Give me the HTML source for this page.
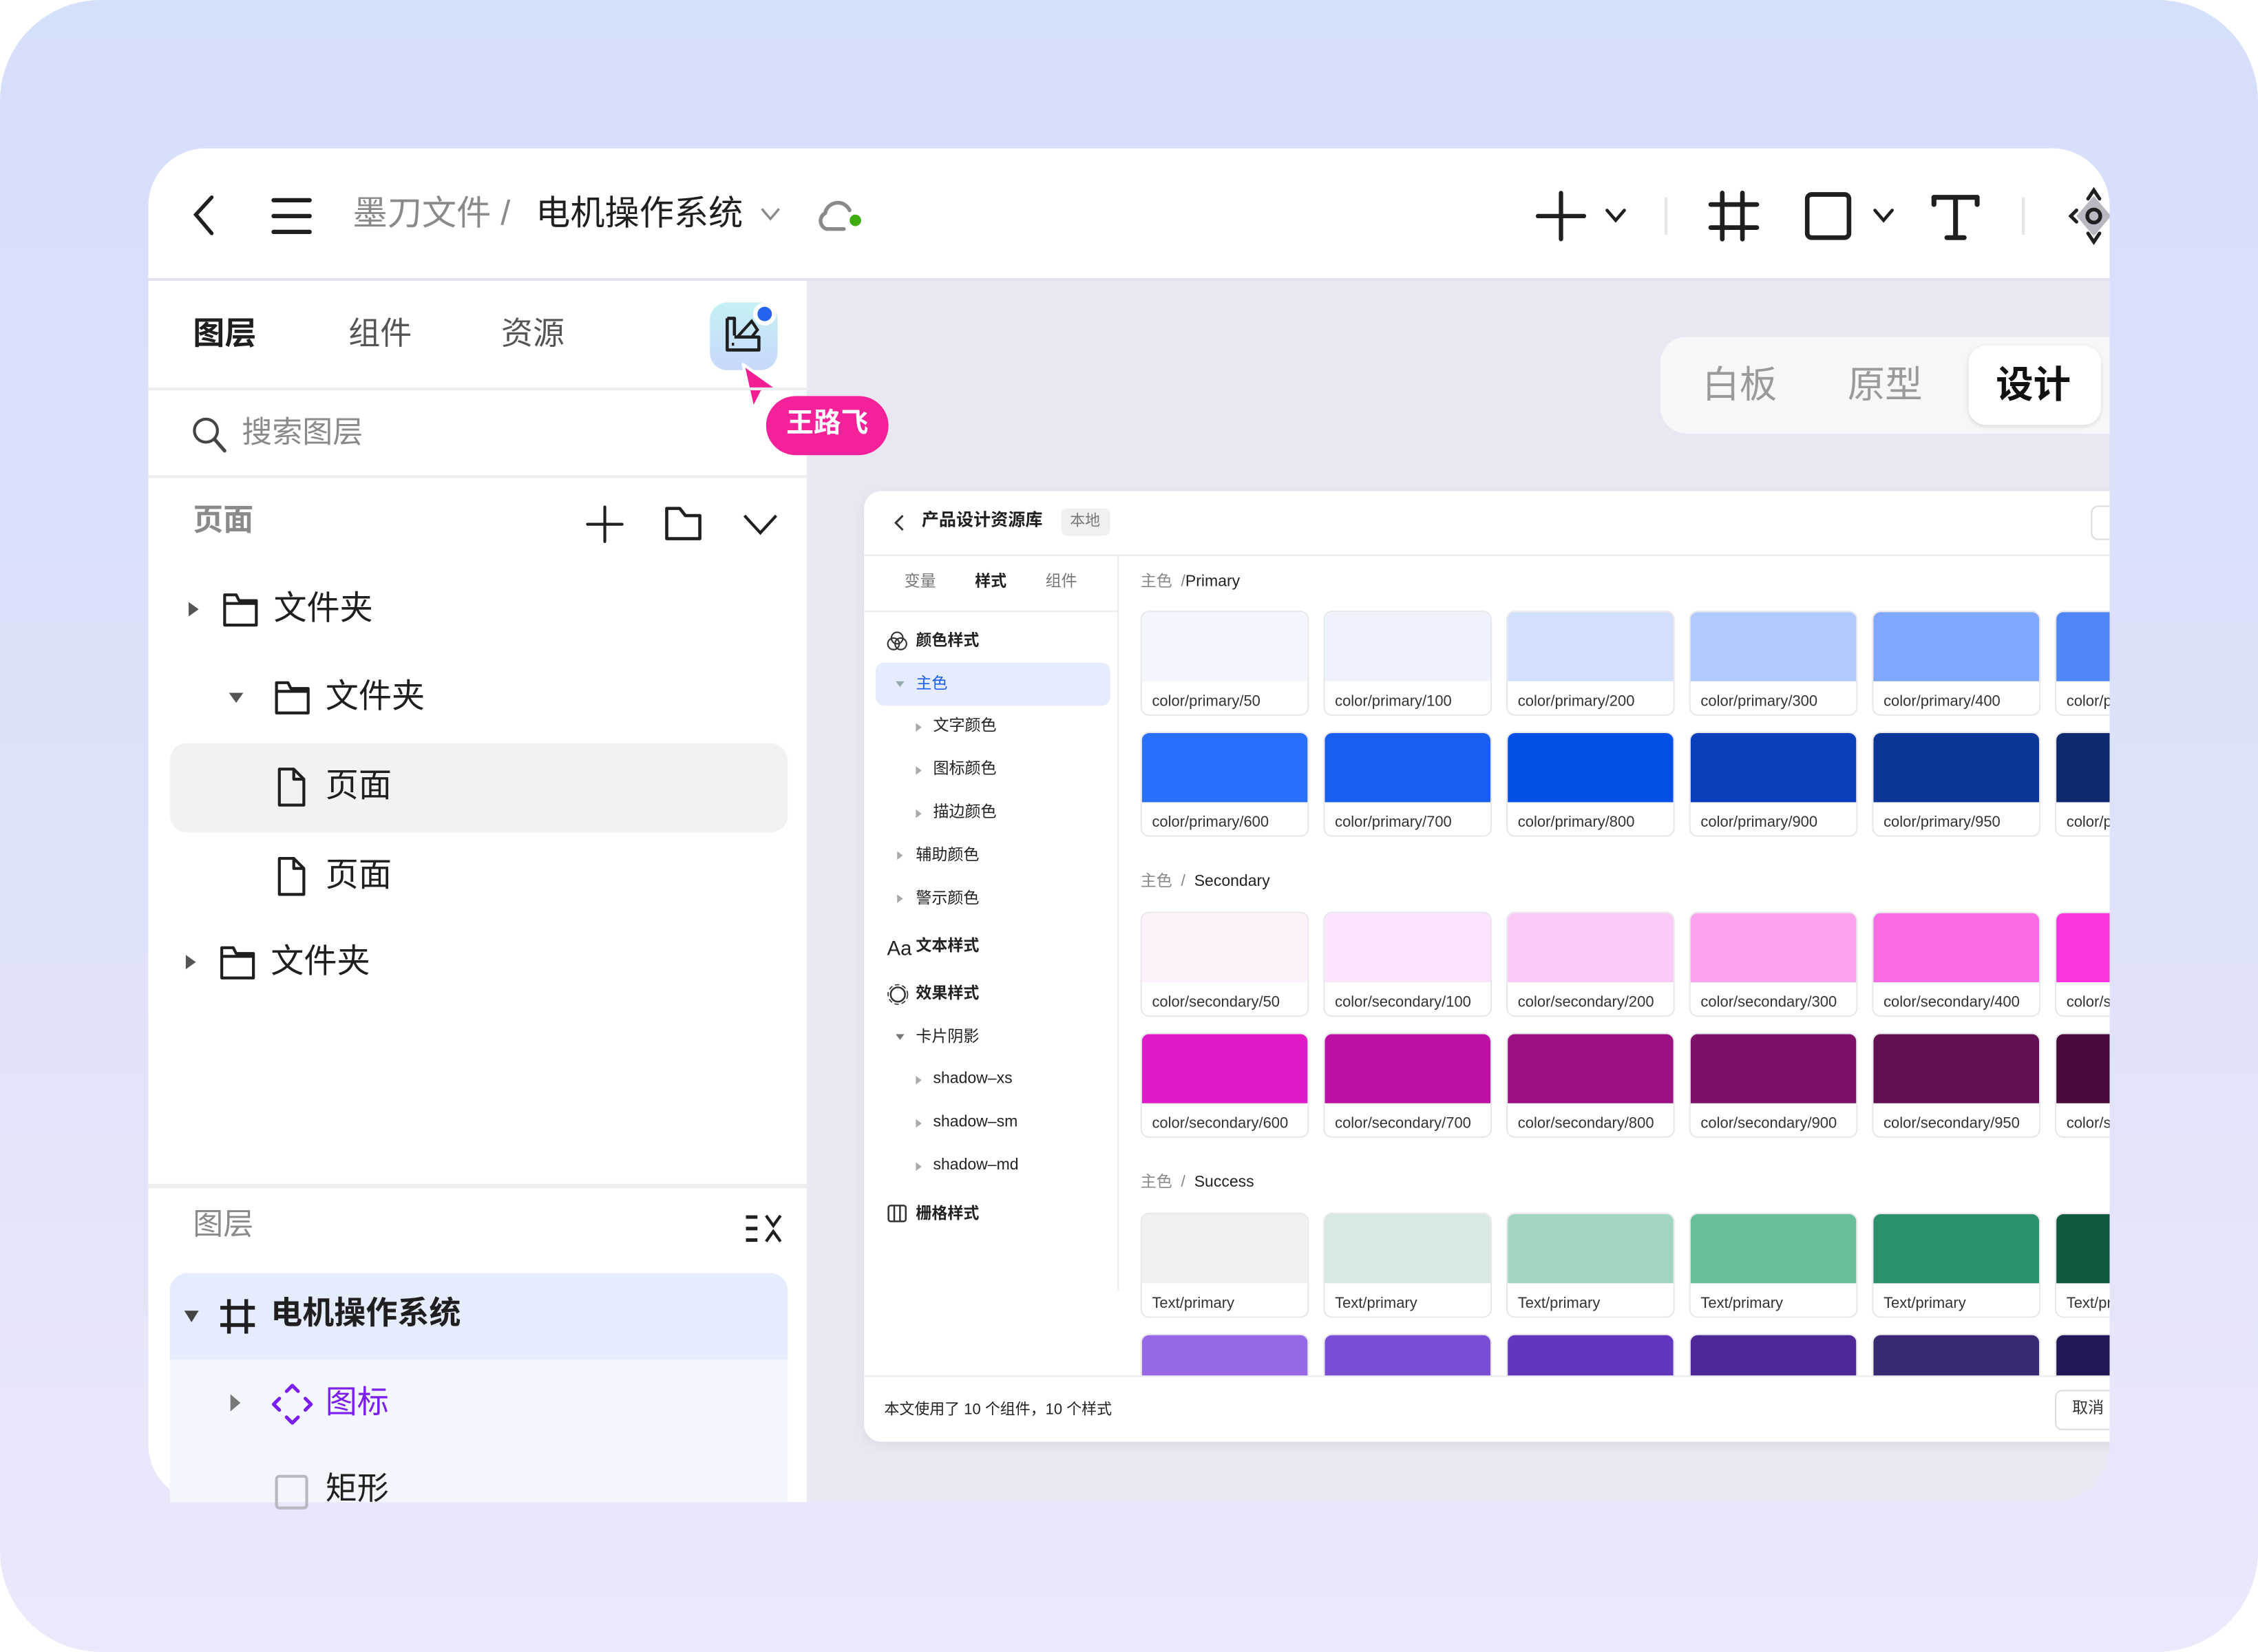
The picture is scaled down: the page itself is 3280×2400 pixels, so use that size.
<!DOCTYPE html>
<html><head><meta charset="utf-8">
<style>
*{margin:0;padding:0;box-sizing:border-box}
html,body{width:3280px;height:2400px;overflow:hidden;background:#fff}
body{font-family:"Liberation Sans","Noto Sans CJK SC",sans-serif;color:#1f1f1f}
#s{position:absolute;left:0;top:0;width:1568px;height:1147px;transform:scale(2.0918,2.0924);transform-origin:0 0;overflow:hidden}
.bg{position:absolute;left:0;top:0;width:1568px;height:1147px;border-radius:70px;background:linear-gradient(180deg,#d5e0fb 0%,#dfe2fa 60%,#ece8fb 100%)}
.a{position:absolute}
.win{position:absolute;left:103px;top:103px;width:1362px;height:940px;border-radius:40px;overflow:hidden;background:#e9e8f2}
.t{position:absolute;white-space:nowrap;line-height:1}
svg{position:absolute;overflow:visible}
.sw{position:absolute;width:117px;height:73px;border:1px solid #e8e8ec;border-radius:6px;overflow:hidden;background:#fff}
.sw i{display:block;height:48px}
.sw span{position:absolute;left:7px;top:56px;font-size:10.5px;color:#333;white-space:nowrap}
.nav{position:absolute;font-size:11px;white-space:nowrap;line-height:1;color:#222}
.tri{position:absolute;width:0;height:0}
</style></head><body>
<div id="s">
<div class="bg"></div>
<div class="win">
 <div class="a" style="left:0;top:0;width:1362px;height:92px;background:#fff;border-bottom:2px solid #e2e2e8"></div>
 <div class="a" style="left:0;top:92px;width:458px;height:848px;background:#fff;border-right:1px solid #ececf0"></div>
</div>
<svg style="left:131px;top:135px" width="20" height="30"><path d="M16 2 L5 14 L16 27" stroke="#1f1f1f" stroke-width="2.6" fill="none" stroke-linecap="round"/></svg>
<svg style="left:188px;top:137px" width="30" height="26"><path d="M2 2H27M2 13H27M2 24H27" stroke="#1f1f1f" stroke-width="3" stroke-linecap="round"/></svg>
<div class="t" style="left:245px;top:137px;font-size:24px;color:#8a8a8a">墨刀文件 /</div>
<div class="t" style="left:372px;top:137px;font-size:24px;color:#1f1f1f">电机操作系统</div>
<svg style="left:528px;top:144px" width="14" height="10"><path d="M1 1 L7 8 L13 1" stroke="#8a8a8a" stroke-width="1.6" fill="none"/></svg>
<svg style="left:566px;top:137px" width="34" height="26"><path d="M8 22 A6 6 0 0 1 7 11 A9 9 0 0 1 24 9" stroke="#8a8a8a" stroke-width="2.6" fill="none" stroke-linecap="round"/><path d="M8 22 H20" stroke="#8a8a8a" stroke-width="2.6" stroke-linecap="round"/><circle cx="28" cy="16" r="4" fill="#3fad12"/></svg>
<svg style="left:1066px;top:132px" width="36" height="36"><path d="M18 2V34M2 18H34" stroke="#1f1f1f" stroke-width="3" stroke-linecap="round"/></svg>
<svg style="left:1114px;top:144px" width="16" height="12"><path d="M2 2L8 9L14 2" stroke="#1f1f1f" stroke-width="2.2" fill="none" stroke-linecap="round"/></svg>
<div class="a" style="left:1156px;top:137px;width:2px;height:26px;background:#e6e6ea"></div>
<svg style="left:1186px;top:132px" width="36" height="36"><path d="M10 2V34M24 2V34M2 10H34M2 26H34" stroke="#1f1f1f" stroke-width="3.2" stroke-linecap="round"/></svg>
<svg style="left:1252px;top:132px" width="36" height="36"><rect x="3" y="3" width="29" height="30" rx="3" stroke="#1f1f1f" stroke-width="3.2" fill="none"/></svg>
<svg style="left:1300px;top:144px" width="16" height="12"><path d="M2 2L8 9L14 2" stroke="#1f1f1f" stroke-width="2.2" fill="none" stroke-linecap="round"/></svg>
<svg style="left:1340px;top:133px" width="36" height="36"><path d="M3 4H33M18 4V32M12 32H24" stroke="#1f1f1f" stroke-width="3.4" stroke-linecap="round"/><path d="M3 4V9M33 4V9" stroke="#1f1f1f" stroke-width="3.4" stroke-linecap="round"/></svg>
<div class="a" style="left:1404px;top:137px;width:2px;height:26px;background:#e6e6ea"></div>
<svg style="left:1436px;top:130px" width="30" height="40"><path d="M18 6 L30 20 L18 34 L6 20Z" fill="#b8b8c0"/><circle cx="18" cy="20" r="4.5" stroke="#1f1f1f" stroke-width="2.6" fill="none"/><path d="M14 8L18 2L22 8M14 32L18 38L22 32M6 16L2 20L6 24" stroke="#1f1f1f" stroke-width="2.4" fill="none" stroke-linecap="round"/></svg>

<div class="t" style="left:134px;top:221px;font-size:22px;font-weight:bold;color:#1f1f1f">图层</div>
<div class="t" style="left:242px;top:221px;font-size:22px;color:#555">组件</div>
<div class="t" style="left:348px;top:221px;font-size:22px;color:#555">资源</div>
<div class="a" style="left:493px;top:210px;width:47px;height:47px;border-radius:12px;background:linear-gradient(180deg,#c4f1f5,#c8d8fb)"></div>
<svg style="left:502px;top:219px" width="28" height="28"><path d="M3 2H8V14 M3 2V24H25V15H8" stroke="#1f1f1f" stroke-width="2.2" fill="none" stroke-linejoin="round"/><path d="M10 15 L20 4 L24 10 L20 15" stroke="#1f1f1f" stroke-width="2" fill="none"/><path d="M7 19V21" stroke="#1f1f1f" stroke-width="1.6"/></svg>
<div class="a" style="left:523px;top:210px;width:16px;height:16px;border-radius:50%;background:#fff"></div>
<div class="a" style="left:526px;top:213px;width:10px;height:10px;border-radius:50%;background:#2463f0"></div>
<svg style="left:512px;top:250px" width="32" height="40"><path d="M4 3 L28 20 L17 22 L11 34Z" fill="#f41e94" stroke="#fff" stroke-width="2" stroke-linejoin="round"/></svg>
<div class="a" style="left:532px;top:275px;width:85px;height:41px;border-radius:21px;background:#f5219a"></div>
<div class="t" style="left:546px;top:285px;font-size:19px;font-weight:bold;color:#fff">王路飞</div>
<div class="a" style="left:103px;top:269px;width:458px;height:2px;background:#ededf0"></div>
<svg style="left:133px;top:289px" width="26" height="28"><circle cx="10" cy="10" r="8" stroke="#444" stroke-width="2" fill="none"/><path d="M16 16L23 24" stroke="#444" stroke-width="2.4" stroke-linecap="round"/></svg>
<div class="t" style="left:168px;top:290px;font-size:21px;color:#8a8a8a">搜索图层</div>
<div class="a" style="left:103px;top:330px;width:458px;height:2px;background:#ededf0"></div>
<div class="t" style="left:134px;top:351px;font-size:21px;color:#8a8a8a;font-weight:bold">页面</div>
<svg style="left:406px;top:350px" width="28" height="28"><path d="M14 2V26M2 14H26" stroke="#1f1f1f" stroke-width="2" stroke-linecap="round"/></svg>
<svg style="left:460px;top:350px" width="30" height="26"><path d="M3 3H12L16 8H26V24H3Z" stroke="#1f1f1f" stroke-width="2.2" fill="none" stroke-linejoin="round"/></svg>
<svg style="left:514px;top:355px" width="28" height="18"><path d="M3 3L14 15L25 3" stroke="#1f1f1f" stroke-width="2" fill="none"/></svg>
<div class="tri" style="left:131px;top:418px;border-left:7px solid #555;border-top:5.5px solid transparent;border-bottom:5.5px solid transparent"></div>
<svg style="left:153px;top:410px" width="28" height="26"><path d="M3 3H11L13 7H25V24H3Z M3 9H25" stroke="#1f1f1f" stroke-width="2" fill="none" stroke-linejoin="round"/></svg>
<div class="t" style="left:190px;top:411px;font-size:23px">文件夹</div>
<div class="tri" style="left:159px;top:481px;border-top:7px solid #555;border-left:5.5px solid transparent;border-right:5.5px solid transparent"></div>
<svg style="left:189px;top:471px" width="28" height="26"><path d="M3 3H11L13 7H25V24H3Z M3 9H25" stroke="#1f1f1f" stroke-width="2" fill="none" stroke-linejoin="round"/></svg>
<div class="t" style="left:226px;top:472px;font-size:23px">文件夹</div>
<div class="a" style="left:118px;top:516px;width:429px;height:62px;border-radius:12px;background:#f2f2f4"></div>
<svg style="left:191px;top:532px" width="24" height="30"><path d="M3 2H13L20 9V27H3Z M13 2V9H20" stroke="#1f1f1f" stroke-width="2" fill="none" stroke-linejoin="round"/></svg>
<div class="t" style="left:226px;top:534px;font-size:23px">页面</div>
<svg style="left:191px;top:594px" width="24" height="30"><path d="M3 2H13L20 9V27H3Z M13 2V9H20" stroke="#1f1f1f" stroke-width="2" fill="none" stroke-linejoin="round"/></svg>
<div class="t" style="left:226px;top:596px;font-size:23px">页面</div>
<div class="tri" style="left:129px;top:663px;border-left:7px solid #555;border-top:5.5px solid transparent;border-bottom:5.5px solid transparent"></div>
<svg style="left:151px;top:655px" width="28" height="26"><path d="M3 3H11L13 7H25V24H3Z M3 9H25" stroke="#1f1f1f" stroke-width="2" fill="none" stroke-linejoin="round"/></svg>
<div class="t" style="left:188px;top:656px;font-size:23px">文件夹</div>
<div class="a" style="left:103px;top:822px;width:458px;height:3px;background:#ededf0"></div>
<div class="t" style="left:134px;top:840px;font-size:21px;color:#8a8a8a">图层</div>
<svg style="left:516px;top:842px" width="30" height="24"><path d="M2 3H10M2 11H10M2 19H10" stroke="#1f1f1f" stroke-width="2.4"/><path d="M16 2L21 9L26 2M16 20L21 13L26 20" stroke="#1f1f1f" stroke-width="2" fill="none"/></svg>
<div class="a" style="left:118px;top:884px;width:429px;height:159px;border-radius:12px 12px 0 0;background:#f4f6fe"></div>
<div class="a" style="left:118px;top:884px;width:429px;height:60px;border-radius:12px 12px 0 0;background:#e4ecfd"></div>
<div class="tri" style="left:128px;top:910px;border-top:8px solid #444;border-left:5.5px solid transparent;border-right:5.5px solid transparent"></div>
<svg style="left:151px;top:900px" width="28" height="28"><path d="M8 2V26M20 2V26M2 8H26M2 20H26" stroke="#1f1f1f" stroke-width="2.6"/></svg>
<div class="t" style="left:188px;top:901px;font-size:22px;font-weight:bold">电机操作系统</div>
<div class="tri" style="left:160px;top:968px;border-left:7px solid #777;border-top:6px solid transparent;border-bottom:6px solid transparent"></div>
<svg style="left:188px;top:960px" width="30" height="30"><path d="M11 6L15 2L19 6 M11 24L15 28L19 24 M6 11L2 15L6 19 M24 11L28 15L24 19" stroke="#7b1ef0" stroke-width="2.4" fill="none" stroke-linecap="round" stroke-linejoin="round"/></svg>
<div class="t" style="left:226px;top:963px;font-size:22px;color:#7b1ef0">图标</div>
<div class="a" style="left:191px;top:1024px;width:23px;height:24px;border:2.5px solid #b8b8c0;border-radius:3px"></div>
<div class="t" style="left:226px;top:1023px;font-size:22px">矩形</div>

<div class="a" style="left:1153px;top:234px;width:312px;height:67px;border-radius:18px 0 0 18px;background:#f7f7f9"></div>
<div class="t" style="left:1182px;top:254px;font-size:26px;color:#9a9a9a">白板</div>
<div class="t" style="left:1283px;top:254px;font-size:26px;color:#9a9a9a">原型</div>
<div class="a" style="left:1367px;top:240px;width:92px;height:55px;border-radius:12px;background:#fff;box-shadow:0 1px 3px rgba(0,0,0,.12)"></div>
<div class="t" style="left:1386px;top:254px;font-size:26px;font-weight:bold;color:#111">设计</div>

<div class="a" style="left:600px;top:341px;width:880px;height:660px;border-radius:12px;background:#fff;box-shadow:0 2px 8px rgba(0,0,0,.06);overflow:hidden">
 <div class="a" style="left:0;top:44px;width:880px;height:1px;background:#ececf0"></div>
 <div class="a" style="left:176px;top:45px;width:1px;height:510px;background:#ececf0"></div>
 <div class="a" style="left:0;top:83px;width:176px;height:1px;background:#ececf0"></div>
 <div class="a" style="left:0;top:614px;width:880px;height:1px;background:#ececf0"></div>
 <div class="a" style="left:852px;top:10px;width:20px;height:24px;border:1px solid #ddd;border-radius:5px"></div>
 <div class="a" style="left:827px;top:624px;width:60px;height:28px;border:1px solid #ddd;border-radius:5px"></div>
</div>
<svg style="left:620px;top:356px" width="10" height="14"><path d="M7 2L2 7L7 12" stroke="#333" stroke-width="1.4" fill="none"/></svg>
<div class="t" style="left:640px;top:355px;font-size:12px;font-weight:bold">产品设计资源库</div>
<div class="a" style="left:737px;top:353px;width:34px;height:19px;border-radius:4px;background:#f0f0f2"></div>
<div class="t" style="left:743px;top:357px;font-size:10.5px;color:#777">本地</div>
<div class="t" style="left:1439px;top:973px;font-size:11px;color:#333">取消</div>
<div class="nav" style="left:628px;top:399px;color:#777">变量</div>
<div class="nav" style="left:677px;top:399px;font-weight:bold">样式</div>
<div class="nav" style="left:726px;top:399px;color:#777">组件</div>
<svg style="left:616px;top:438px" width="14" height="14"><circle cx="7" cy="5" r="4" stroke="#333" fill="none"/><circle cx="4.5" cy="9" r="4" stroke="#333" fill="none"/><circle cx="9.5" cy="9" r="4" stroke="#333" fill="none"/></svg>
<div class="nav" style="left:636px;top:440px;font-weight:bold">颜色样式</div>
<div class="a" style="left:608px;top:460px;width:163px;height:30px;border-radius:6px;background:#e4ecfd"></div>
<div class="tri" style="left:622px;top:473px;border-top:4px solid #9aa;border-left:3px solid transparent;border-right:3px solid transparent"></div>
<div class="nav" style="left:636px;top:470px;color:#1e5ef0">主色</div>
<div class="tri" style="left:636px;top:502px;border-left:4px solid #aaa;border-top:3px solid transparent;border-bottom:3px solid transparent"></div>
<div class="nav" style="left:648px;top:499px">文字颜色</div>
<div class="tri" style="left:636px;top:532px;border-left:4px solid #aaa;border-top:3px solid transparent;border-bottom:3px solid transparent"></div>
<div class="nav" style="left:648px;top:529px">图标颜色</div>
<div class="tri" style="left:636px;top:562px;border-left:4px solid #aaa;border-top:3px solid transparent;border-bottom:3px solid transparent"></div>
<div class="nav" style="left:648px;top:559px">描边颜色</div>
<div class="tri" style="left:623px;top:591px;border-left:4px solid #aaa;border-top:3px solid transparent;border-bottom:3px solid transparent"></div>
<div class="nav" style="left:636px;top:589px">辅助颜色</div>
<div class="tri" style="left:623px;top:621px;border-left:4px solid #aaa;border-top:3px solid transparent;border-bottom:3px solid transparent"></div>
<div class="nav" style="left:636px;top:619px">警示颜色</div>
<div class="nav" style="left:616px;top:651px;font-size:14px">Aa</div>
<div class="nav" style="left:636px;top:652px;font-weight:bold">文本样式</div>
<svg style="left:616px;top:683px" width="15" height="15"><circle cx="7.5" cy="7.5" r="5" stroke="#333" stroke-width="1.2" fill="none"/><circle cx="7.5" cy="7.5" r="6.8" stroke="#333" stroke-width="0.8" stroke-dasharray="3 2" fill="none"/></svg>
<div class="nav" style="left:636px;top:685px;font-weight:bold">效果样式</div>
<div class="tri" style="left:622px;top:718px;border-top:4px solid #777;border-left:3px solid transparent;border-right:3px solid transparent"></div>
<div class="nav" style="left:636px;top:715px">卡片阴影</div>
<div class="tri" style="left:636px;top:747px;border-left:4px solid #aaa;border-top:3px solid transparent;border-bottom:3px solid transparent"></div>
<div class="nav" style="left:648px;top:744px">shadow–xs</div>
<div class="tri" style="left:636px;top:777px;border-left:4px solid #aaa;border-top:3px solid transparent;border-bottom:3px solid transparent"></div>
<div class="nav" style="left:648px;top:774px">shadow–sm</div>
<div class="tri" style="left:636px;top:807px;border-left:4px solid #aaa;border-top:3px solid transparent;border-bottom:3px solid transparent"></div>
<div class="nav" style="left:648px;top:804px">shadow–md</div>
<svg style="left:616px;top:836px" width="15" height="14"><rect x="1" y="1" width="12" height="11" rx="1.5" stroke="#333" stroke-width="1.2" fill="none"/><path d="M5 1V12M9 1V12" stroke="#333" stroke-width="1.2"/></svg>
<div class="nav" style="left:636px;top:838px;font-weight:bold">栅格样式</div>
<div class="nav" style="left:614px;top:974px;font-size:10.5px">本文使用了 10 个组件，10 个样式</div>

<div class="nav" style="left:792px;top:399px"><span style="color:#888">主色 &nbsp;/</span>Primary</div>
<div class="nav" style="left:792px;top:607px"><span style="color:#888">主色 &nbsp;/ &nbsp;</span>Secondary</div>
<div class="nav" style="left:792px;top:816px"><span style="color:#888">主色 &nbsp;/ &nbsp;</span>Success</div>

<div class="a" style="left:0;top:0;width:1465px;height:955px;overflow:hidden">
<div class="sw" style="left:792px;top:424px"><i style="background:#f3f6fd"></i><span>color/primary/50</span></div>
<div class="sw" style="left:919px;top:424px"><i style="background:#eef2fd"></i><span>color/primary/100</span></div>
<div class="sw" style="left:1046px;top:424px"><i style="background:#d3e0fd"></i><span>color/primary/200</span></div>
<div class="sw" style="left:1173px;top:424px"><i style="background:#b0c9fc"></i><span>color/primary/300</span></div>
<div class="sw" style="left:1300px;top:424px"><i style="background:#7fa8fb"></i><span>color/primary/400</span></div>
<div class="sw" style="left:1427px;top:424px"><i style="background:#4f86f7"></i><span>color/primary/500</span></div>
<div class="sw" style="left:792px;top:508px"><i style="background:#2a6ffb"></i><span>color/primary/600</span></div>
<div class="sw" style="left:919px;top:508px"><i style="background:#1a5ef0"></i><span>color/primary/700</span></div>
<div class="sw" style="left:1046px;top:508px"><i style="background:#0450e6"></i><span>color/primary/800</span></div>
<div class="sw" style="left:1173px;top:508px"><i style="background:#0a3fbb"></i><span>color/primary/900</span></div>
<div class="sw" style="left:1300px;top:508px"><i style="background:#0b3597"></i><span>color/primary/950</span></div>
<div class="sw" style="left:1427px;top:508px"><i style="background:#0d2a6e"></i><span>color/primary/990</span></div>
<div class="sw" style="left:792px;top:633px"><i style="background:#fdf1fb"></i><span>color/secondary/50</span></div>
<div class="sw" style="left:919px;top:633px"><i style="background:#fde3fb"></i><span>color/secondary/100</span></div>
<div class="sw" style="left:1046px;top:633px"><i style="background:#fcc8f5"></i><span>color/secondary/200</span></div>
<div class="sw" style="left:1173px;top:633px"><i style="background:#fba2ee"></i><span>color/secondary/300</span></div>
<div class="sw" style="left:1300px;top:633px"><i style="background:#fa6ce5"></i><span>color/secondary/400</span></div>
<div class="sw" style="left:1427px;top:633px"><i style="background:#fb34e0"></i><span>color/secondary/500</span></div>
<div class="sw" style="left:792px;top:717px"><i style="background:#e01ac8"></i><span>color/secondary/600</span></div>
<div class="sw" style="left:919px;top:717px"><i style="background:#bd10a5"></i><span>color/secondary/700</span></div>
<div class="sw" style="left:1046px;top:717px"><i style="background:#9a1083"></i><span>color/secondary/800</span></div>
<div class="sw" style="left:1173px;top:717px"><i style="background:#7d1169"></i><span>color/secondary/900</span></div>
<div class="sw" style="left:1300px;top:717px"><i style="background:#640f53"></i><span>color/secondary/950</span></div>
<div class="sw" style="left:1427px;top:717px"><i style="background:#4a0a3c"></i><span>color/secondary/990</span></div>
<div class="sw" style="left:792px;top:842px"><i style="background:#eef1f0"></i><span>Text/primary</span></div>
<div class="sw" style="left:919px;top:842px"><i style="background:#d8e9e1"></i><span>Text/primary</span></div>
<div class="sw" style="left:1046px;top:842px"><i style="background:#a2d6c0"></i><span>Text/primary</span></div>
<div class="sw" style="left:1173px;top:842px"><i style="background:#67bf99"></i><span>Text/primary</span></div>
<div class="sw" style="left:1300px;top:842px"><i style="background:#2a9168"></i><span>Text/primary</span></div>
<div class="sw" style="left:1427px;top:842px"><i style="background:#115a3d"></i><span>Text/primary</span></div>
<div class="sw" style="left:792px;top:926px"><i style="background:#9668e6"></i></div>
<div class="sw" style="left:919px;top:926px"><i style="background:#7a4ed4"></i></div>
<div class="sw" style="left:1046px;top:926px"><i style="background:#6237bd"></i></div>
<div class="sw" style="left:1173px;top:926px"><i style="background:#4c2b96"></i></div>
<div class="sw" style="left:1300px;top:926px"><i style="background:#3b2872"></i></div>
<div class="sw" style="left:1427px;top:926px"><i style="background:#221858"></i></div>
</div>
<div class="a" style="left:1465px;top:0;width:103px;height:1147px;background:linear-gradient(180deg,#d5e0fb 0%,#dfe2fa 60%,#ece8fb 100%);border-radius:0 70px 70px 0"></div>
</div>
</body></html>
